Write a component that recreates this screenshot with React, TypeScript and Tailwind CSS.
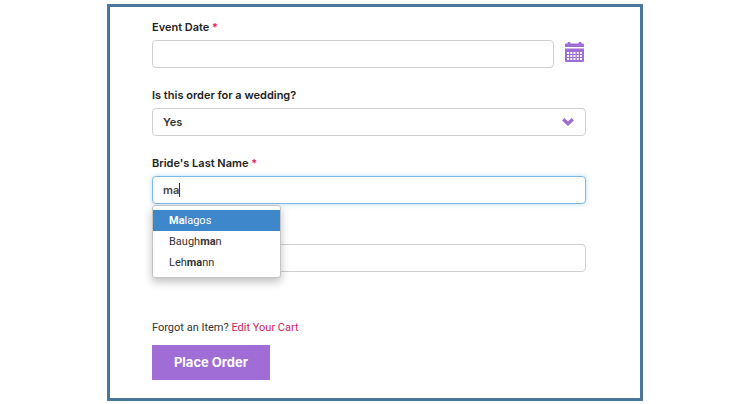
import { useState } from "react";
import type { ReactElement, ReactNode } from "react";

interface Suggestion {
  before: string;
  match: string;
  after: string;
}

const suggestions: Suggestion[] = [
  { before: "", match: "Ma", after: "lagos" },
  { before: "Baugh", match: "ma", after: "n" },
  { before: "Leh", match: "ma", after: "nn" },
];

const control = "h-7 w-full rounded border border-[#cfcfcf] bg-white px-2.5 outline-none";

function Label({ htmlFor, required, children }: { htmlFor: string; required?: boolean; children: ReactNode }) {
  return (
    <label
      htmlFor={htmlFor}
      className="mb-[5px] block h-4 font-['Inter',sans-serif] leading-4 font-semibold text-[#222]"
    >
      {children}
      {required && <span className="text-[#e0245e]"> *</span>}
    </label>
  );
}

function CalendarIcon() {
  return (
    <svg viewBox="0 0 19 20" className="h-5 w-[19px]" fill="#a06cd5" aria-hidden="true">
      <path d="M0 5V2.500q0-1 1-1h1.500V1q0-1 1-1h1q1 0 1 1v.5h8V1q0-1 1-1h1q1 0 1 1v.5H18q1 0 1 1V5z" />
      {/* body with the day cells cut out */}
      <path
        fillRule="evenodd"
        d="M0 6.500h19V19q0 1-1 1H1q-1 0-1-1zM2 10v2h2v-2zm3.250 0v2h2v-2zm3.250 0v2h2v-2zm3.250 0v2h2v-2zM15 10v2h2v-2zM2 13v2h2v-2zm3.250 0v2h2v-2zm3.250 0v2h2v-2zm3.250 0v2h2v-2zM15 13v2h2v-2zM2 16v2h2v-2zm3.250 0v2h2v-2zm3.250 0v2h2v-2zm3.250 0v2h2v-2zM15 16v2h2v-2z"
      />
    </svg>
  );
}

// Text field with the open suggestion list under it
function NameField(): ReactElement {
  const [value, setValue] = useState("ma");

  return (
    <div className="relative">
      <Label htmlFor="bride" required>
        Bride's Last Name
      </Label>
      <div className="relative">
        <input
          id="bride"
          autoComplete="off"
          value={value}
          onChange={(e) => setValue(e.target.value)}
          className="h-7 w-full rounded border border-[#7fb9e2] bg-white px-2.5 font-['Inter',sans-serif] font-semibold text-[#444] caret-transparent shadow-[0_0_5px_rgba(102,175,233,0.45)] outline-none"
        />
        <span aria-hidden="true" className="pointer-events-none absolute inset-y-0 left-[27px] flex items-center">
          <span className="h-3.5 w-px bg-[#333]" />
        </span>
      </div>
      <ul
        role="listbox"
        className="absolute top-full left-0 z-10 mt-px w-[129px] rounded-[3px] border border-[#c4c4c4] bg-white py-1 shadow-[0_4px_8px_rgba(0,0,0,0.25)]"
      >
        {suggestions.map((s, i) => (
          <li
            key={s.before + s.after}
            role="option"
            aria-selected={i === 0}
            className={i === 0 ? "bg-[#3e87cb] px-4 leading-[21px] text-white" : "px-4 leading-[21px] text-[#333]"}
          >
            {s.before}
            <b>{s.match}</b>
            {s.after}
          </li>
        ))}
      </ul>
    </div>
  );
}

export default function App(): ReactElement {
  return (
    <div className="bg-white px-[107px] pt-1 pb-[3px] font-['Roboto',sans-serif] text-[11px] text-[#333]">
      <form
        onSubmit={(e) => e.preventDefault()}
        className="border-[3px] border-[#497799] pt-3 pr-[54px] pb-[18px] pl-[42px]"
      >
        <div className="flex flex-col gap-[19px]">
          <div>
            <Label htmlFor="date" required>
              Event Date
            </Label>
            <div className="flex items-start gap-[11px]">
              <input id="date" className={control} />
              <button type="button" aria-label="Choose date" className="mt-0.5 mr-0.5 shrink-0">
                <CalendarIcon />
              </button>
            </div>
          </div>

          <div>
            <Label htmlFor="wedding">Is this order for a wedding?</Label>
            <div className="relative">
              <select
                id="wedding"
                className={`${control} appearance-none font-['Inter',sans-serif] font-semibold`}
              >
                <option>Yes</option>
                <option>No</option>
              </select>
              <svg
                viewBox="0 0 12 8"
                className="pointer-events-none absolute top-2.5 right-3 h-2 w-3"
                fill="none"
                stroke="#a06cd5"
                strokeWidth="3.400"
                aria-hidden="true"
              >
                <path d="M1.200 1.300 6 5.700l4.800-4.400" />
              </svg>
            </div>
          </div>

          <NameField />

          <input aria-label="Last name" className={`${control} mt-[21px]`} />
        </div>

        <p className="mt-12 leading-4">
          Forgot an Item?{" "}
          <a href="#cart" className="text-[#d02560]">
            Edit Your Cart
          </a>
        </p>
        <button
          type="submit"
          className="mt-[9px] h-[35px] w-[118px] bg-[#a06cd5] font-['Inter',sans-serif] text-[13px] font-bold text-white"
        >
          Place Order
        </button>
      </form>
    </div>
  );
}
